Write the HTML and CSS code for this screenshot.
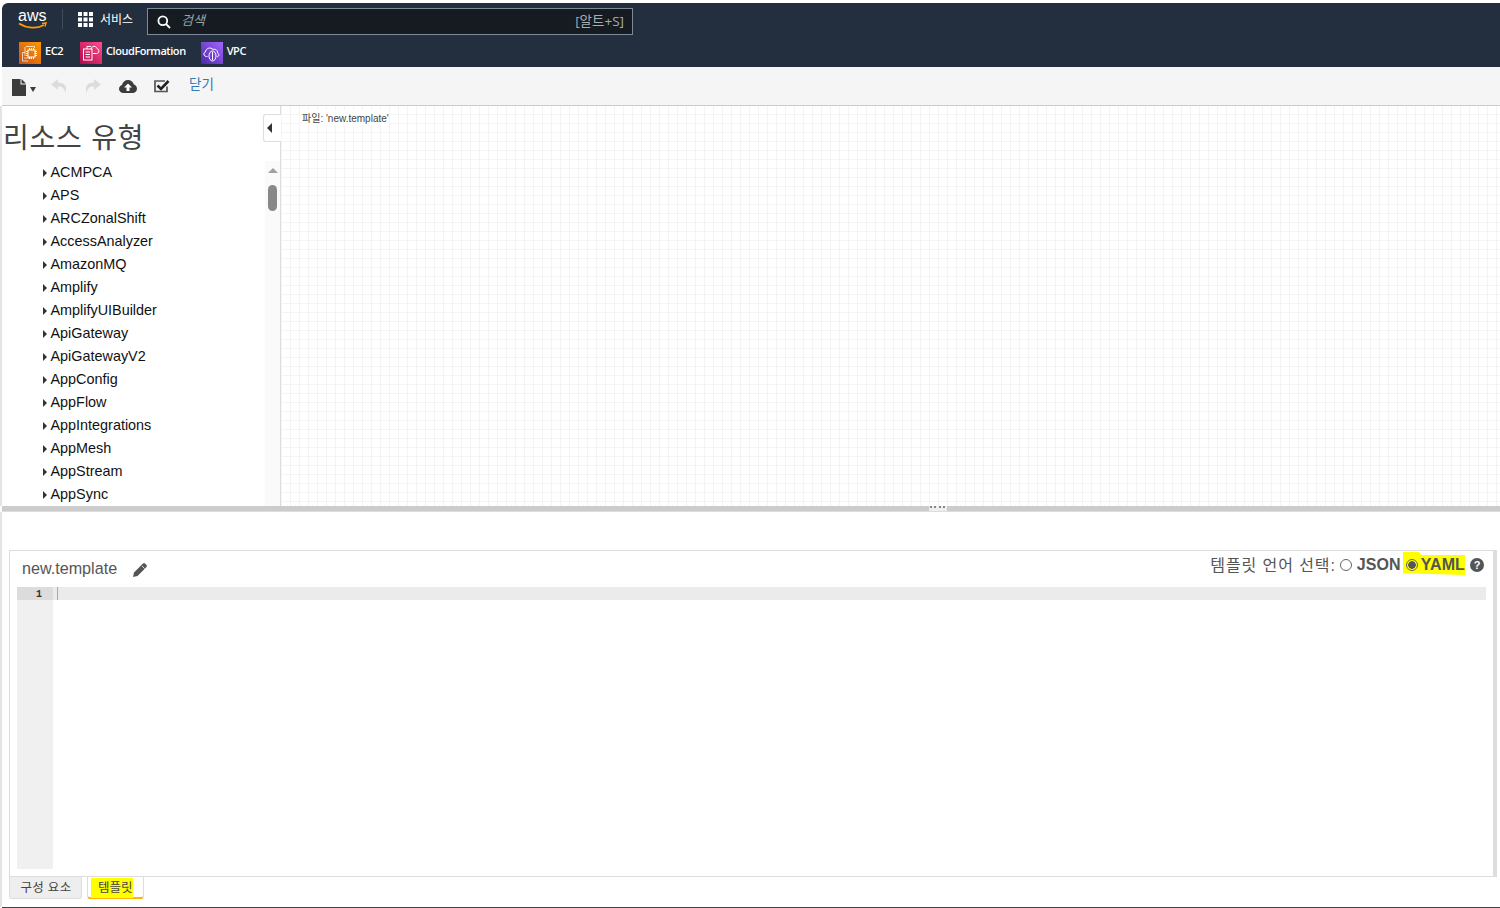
FILE: index.html
```html
<!DOCTYPE html>
<html lang="ko">
<head>
<meta charset="utf-8">
<title>CloudFormation Designer</title>
<link rel="stylesheet" href="styles.css">
</head>
<body>
<div class="app">
  <header class="nav">
    <div class="nav-top">
      <svg class="aws-logo" width="32" height="24" viewBox="0 0 32 24">
        <text x="0" y="13" class="aws-text">aws</text>
        <path d="M1 15.500c8 5 18 5.500 25 1.500" fill="none" stroke="#f90" stroke-width="1.700"/>
        <path d="M24 15.500l4-.5-1 3.500" fill="none" stroke="#f90" stroke-width="1.500"/>
      </svg>
      <span class="nav-sep"></span>
      <svg class="grid-icon" width="15" height="15" viewBox="0 0 15 15" fill="#fff">
        <rect width="4" height="4"/><rect x="5.500" width="4" height="4"/><rect x="11" width="4" height="4"/>
        <rect y="5.500" width="4" height="4"/><rect x="5.500" y="5.500" width="4" height="4"/><rect x="11" y="5.500" width="4" height="4"/>
        <rect y="11" width="4" height="4"/><rect x="5.500" y="11" width="4" height="4"/><rect x="11" y="11" width="4" height="4"/>
      </svg>
      <span class="services">서비스</span>
      <div class="search">
        <svg width="14" height="14" viewBox="0 0 14 14" fill="none" stroke="#fff" stroke-width="1.800"><circle cx="5.800" cy="5.800" r="4.400"/><path d="M9 9l4 4"/></svg>
        <span class="search-ph">검색</span>
        <span class="search-key">[알트+S]</span>
      </div>
    </div>
    <div class="nav-fav">
      <a class="fav fav-ec2">
        <span class="fav-icon ec2"><svg width="18" height="18" viewBox="0 0 18 18" fill="none" stroke="#fff" stroke-width="1"><path d="M7 17H1.500V8.500H4M5 2.500h8.500V4" stroke-opacity=".7"/><path d="M4 14h-1" stroke-opacity=".7"/><path d="M4 12V3" stroke-opacity=".7"/><path d="M4 14h6" stroke-opacity=".7"/><rect x="7" y="6" width="7" height="7"/><path d="M8.500 4v2M10.500 4v2M12.500 4v2M8.500 13v2M10.500 13v2M12.500 13v2M5 7.500h2M5 9.500h2M5 11.500h2M14 7.500h2M14 9.500h2M14 11.500h2"/></svg></span>
        <span>EC2</span>
      </a>
      <a class="fav fav-cf">
        <span class="fav-icon cf"><svg width="18" height="18" viewBox="0 0 18 18" fill="none" stroke="#fff" stroke-width="1"><path d="M5 5V2.500h4M9 5c1-3.500 5-3.500 6-.5 2.500.5 2.500 5-.5 5H11"/><rect x="1.500" y="5" width="8.500" height="11"/><path d="M3.500 8h4.500M3.500 10.500h4.500M3.500 13h4.500"/></svg></span>
        <span>CloudFormation</span>
      </a>
      <a class="fav">
        <span class="fav-icon vpc"><svg width="18" height="18" viewBox="0 0 18 18" fill="none" stroke="#fff" stroke-width="1"><path d="M4.500 12.500H3.500c-3 0-3.500-4-1-4.500 0-3.500 5-5.500 7.500-2.500 2.500-1 5 1 4.500 3.500 2 .5 2 3.500-.5 3.500"/><ellipse cx="9.500" cy="12" rx="3.500" ry="5"/><path d="M9.500 8v8"/></svg></span>
        <span>VPC</span>
      </a>
    </div>
  </header>

  <div class="toolbar">
    <span class="tool-file">
      <svg width="15" height="17" viewBox="0 0 15 17" fill="#3c3c3c"><path d="M0 0h8.500v5.500H14V17H0z"/><path d="M9.500 0L14 4.500H9.500z"/></svg>
      <span class="caret"></span>
    </span>
    <svg class="tool tool-undo" width="17" height="14" viewBox="0 0 17 14" fill="#dcdcdc"><path d="M7 0L0 5.500 7 11V7.500c4 0 6 1 7.500 6.500 2-6.500-1-10.500-7.500-10.500z"/></svg>
    <svg class="tool tool-redo" width="17" height="14" viewBox="0 0 17 14" fill="#dcdcdc"><path d="M10 0l7 5.500L10 11V7.500c-4 0-6 1-7.500 6.500-2-6.500 1-10.500 7.500-10.500z"/></svg>
    <svg class="tool" width="18" height="13" viewBox="0 0 18 13"><path d="M4.500 13C2 13 0 11.300 0 9c0-2 1.300-3.500 3-4C3.500 2 6 0 9 0c2.800 0 5 1.800 5.700 4.200C16.600 4.800 18 6.600 18 8.800 18 11.200 16 13 13.500 13z" fill="#3c3c3c"/><path d="M9 3.500L5 7.500h2.500V11h3V7.500H13z" fill="#fff"/></svg>
    <svg class="tool" width="16" height="14" viewBox="0 0 16 14" fill="none"><path d="M13 7.500V12.500H1V2h10" stroke="#555" stroke-width="1.700"/><path d="M3.500 6.500L7 10l7.500-8" stroke="#222" stroke-width="2.600"/></svg>
    <a class="close-link">닫기</a>
  </div>

  <div class="designer">
    <aside class="palette">
      <h2 class="palette-title">리소스 유형</h2>
      <div class="palette-body">
        <ul class="tree">
          <li>ACMPCA</li>
          <li>APS</li>
          <li>ARCZonalShift</li>
          <li>AccessAnalyzer</li>
          <li>AmazonMQ</li>
          <li>Amplify</li>
          <li>AmplifyUIBuilder</li>
          <li>ApiGateway</li>
          <li>ApiGatewayV2</li>
          <li>AppConfig</li>
          <li>AppFlow</li>
          <li>AppIntegrations</li>
          <li>AppMesh</li>
          <li>AppStream</li>
          <li>AppSync</li>
        </ul>
        <div class="scrollbar">
          <span class="sb-up"></span>
          <span class="sb-thumb"></span>
        </div>
      </div>
      <button class="collapse"><span class="collapse-arrow"></span></button>
    </aside>
    <main class="canvas">
      <span class="file-label">파일: 'new.template'</span>
    </main>
  </div>

  <div class="splitter"><span class="grip"></span></div>

  <section class="editor-wrap">
    <div class="editor-panel">
      <div class="editor-head">
        <div class="file-name">
          <span>new.template</span>
          <svg width="15" height="15" viewBox="0 0 15 15" fill="#555"><path d="M0 15l1-4.500L10 1.500a1.500 1.500 0 0 1 2 0l1.500 1.500a1.500 1.500 0 0 1 0 2L4.500 14z"/><path d="M9 4l2.500 2.500" stroke="#fff" stroke-width=".8"/></svg>
        </div>
        <div class="lang">
          <span class="lang-label">템플릿 언어 선택:</span>
          <span class="radio"></span>
          <b class="lang-opt">JSON</b>
          <span class="hl-yaml">
            <span class="radio checked"></span>
            <b class="lang-opt">YAML</b>
          </span>
          <svg class="help" width="14" height="14" viewBox="0 0 14 14"><circle cx="7" cy="7" r="7" fill="#555"/><text x="7" y="11" class="help-q">?</text></svg>
        </div>
      </div>
      <div class="code">
        <div class="gutter"><div class="gutter-active">1</div></div>
        <div class="lines"><div class="active-line"><span class="cursor"></span></div></div>
      </div>
    </div>
    <div class="tabs">
      <span class="tab">구성 요소</span>
      <span class="tab active"><mark class="hl-tab">템플릿</mark></span>
    </div>
  </section>
  <div class="bottom-line"></div>
</div>
</body>
</html>
```
FILE: styles.css
```css
* { box-sizing: border-box; }
html, body { margin: 0; padding: 0; height: 908px; overflow: hidden; background: #fff; }
body { font-family: "Liberation Sans", "Noto Sans CJK KR", sans-serif; color: #000; }
.app { display: flex; flex-direction: column; height: 908px; padding-top: 3px; }

.nav { margin-left: 2px; height: 64px; background: #232f3e; border-top-left-radius: 6px; color: #fff; font-family: "Open Sans", "Noto Sans CJK KR", sans-serif; }
.nav-top { height: 32px; display: flex; align-items: center; padding-left: 16px; }
.aws-logo { margin-top: 2px; flex: none; }
.aws-text { font: 16px "Liberation Sans", sans-serif; fill: #fff; }
.nav-sep { width: 1px; height: 20px; background: #414d5c; margin: 0 15px 0 12px; }
.grid-icon { flex: none; }
.services { font-size: 12px; margin-left: 7px; width: 47px; margin-top: -1px; }
.search { width: 486px; height: 27px; margin-top: 5px; background: #161b22; border: 1px solid #7d8998; display: flex; align-items: center; padding: 0 8px 0 9px; }
.search-ph { font-style: italic; font-size: 13px; color: #95a5a6; margin-left: 10px; flex: 1; margin-top: -4px; }
.search-key { font-size: 13.500px; color: #a3aeb5; margin-top: -3px; }

.nav-fav { height: 32px; display: flex; align-items: center; padding-left: 17px; font-size: 11px; font-weight: 600; }
.fav { display: flex; align-items: center; letter-spacing: -.45px; margin-top: 3px; }
.fav > span:last-child { margin-top: -4px; }
.fav-ec2 { margin-right: 17px; }
.fav-cf { margin-right: 15px; }
.fav-cf .fav-icon { margin-right: 4px; }
.fav-icon { width: 22px; height: 22px; display: flex; align-items: center; justify-content: center; margin-right: 4px; }
.ec2 { background: linear-gradient(45deg, #c8511b, #ff9900); }
.cf { background: linear-gradient(45deg, #b0084d, #ff4f8b); }
.vpc { background: linear-gradient(45deg, #4d27a8, #a166ff); }

.toolbar { margin-left: 2px; height: 39px; background: #f5f5f5; border-bottom: 1px solid #ccc; display: flex; align-items: center; padding-left: 10px; }
.tool-file { display: flex; align-items: center; width: 39px; margin-top: 2px; }
.caret { width: 0; height: 0; border-left: 3px solid transparent; border-right: 3px solid transparent; border-top: 5px solid #3c3c3c; margin: 4px 0 0 3px; }
.tool { margin-right: 17px; flex: none; }
.tool-undo { margin-right: 16px; }
.tool-redo { margin-right: 18px; }
.close-link { color: #337ab7; font-size: 13.500px; margin: -7px 0 0 2px; }

.designer { height: 400px; display: flex; border-left: 2px solid #e4e4e4; }
.palette { width: 279px; position: relative; border-right: 1px solid #ddd; display: flex; flex-direction: column; overflow: visible; }
.palette-title { margin: 18px 0 0 1px; height: 31px; font-size: 28px; letter-spacing: .8px; font-weight: 400; line-height: 30px; color: #444; white-space: nowrap; }
.palette-body { flex: 1; display: flex; min-height: 0; margin-top: 6px; overflow: hidden; }
.tree { list-style: none; margin: 0; padding: 0 0 0 39px; flex: 1; }
.tree li { height: 23px; font-size: 14.400px; line-height: 23px; color: #111; position: relative; padding-left: 9.500px; white-space: nowrap; }
.tree li::before { content: ""; position: absolute; left: 1.500px; top: 7.500px; border-top: 4px solid transparent; border-bottom: 4px solid transparent; border-left: 4px solid #333; }
.scrollbar { width: 15px; background: #fafafa; position: relative; flex: none; }
.sb-up { position: absolute; left: 3px; top: 7px; border-left: 5px solid transparent; border-right: 5px solid transparent; border-bottom: 5px solid #a0a0a0; }
.sb-thumb { position: absolute; left: 3px; top: 24px; width: 9px; height: 26px; border-radius: 5px; background: #888; }
.collapse { position: absolute; right: -1px; top: 8px; width: 18px; height: 28px; padding: 0 0 0 3px; background: #fff; border: 1px solid #ddd; border-right: 0; border-radius: 3px 0 0 3px; display: flex; align-items: center; justify-content: flex-start; }
.collapse-arrow { border-top: 5px solid transparent; border-bottom: 5px solid transparent; border-right: 5px solid #333; }

.canvas { flex: 1; position: relative; background-color: #fff; background-image: linear-gradient(to right, #f4f4f4 1px, transparent 1px), linear-gradient(to bottom, #f4f4f4 1px, transparent 1px); background-size: 9px 9px; background-position: 0 8px; }
.file-label { position: absolute; left: 21px; top: 4px; font-size: 10px; color: #444; background: #fff; white-space: nowrap; }

.splitter { height: 6px; margin-left: 2px; background: #ccc; border-bottom: 1px solid #ddd; display: flex; flex: none; }
.grip { width: 18px; height: 5px; margin-left: 927px; background-color: #eee; background-image: repeating-linear-gradient(to right, #888 0 2px, #eee 2px 4.500px); background-size: 100% 2px; background-position: 1px 0; background-repeat: no-repeat; }

.editor-wrap { flex: 1; padding: 38px 3px 0 7px; border-left: 2px solid #e4e4e4; display: flex; flex-direction: column; min-height: 0; }
.editor-panel { height: 327px; border: 1px solid #ddd; border-right: 4px solid #ddd; padding: 0 7px 7px 7px; display: flex; flex-direction: column; }
.editor-head { height: 36px; display: flex; justify-content: space-between; flex: none; }
.file-name { display: flex; align-items: center; gap: 16px; font-size: 16.150px; color: #555; padding: 0 0 2px 5px; }
.file-name svg { margin-top: 3px; }
.lang { display: flex; align-items: center; font-size: 16px; color: #555; height: 28px; padding-right: 2px; }
.lang-label { margin: -2px 4px 0 0; letter-spacing: .9px; }
.lang-opt { font-weight: 700; letter-spacing: .1px; }
.radio { width: 12px; height: 12px; border-radius: 50%; border: 1px solid #666; background: #fff; margin: 0 5px 0 0; flex: none; }
.radio.checked { background: radial-gradient(circle, #555 0 3.500px, transparent 4px); margin: 0 3px 0 3px; }
.hl-yaml { display: flex; align-items: center; background: #ff0; height: 23px; margin: -3px 5px 0 2px; padding-top: 2px; color: #555; clip-path: polygon(0 0, 26% 0, 30% 13%, 100% 13%, 100% 100%, 0 92%); }
.help { flex: none; }
.help-q { font: bold 11px "Liberation Sans", sans-serif; fill: #fff; text-anchor: middle; }

.code { flex: 1; display: flex; min-height: 0; }
.gutter { width: 36px; background: #f0f0f0; flex: none; }
.gutter-active { height: 13px; background: #dcdcdc; font: bold 10px/15px "Liberation Mono", monospace; color: #333; text-align: right; padding-right: 11px; overflow: hidden; }
.lines { flex: 1; }
.active-line { height: 13px; background: #ebebeb; padding-left: 4px; }
.cursor { display: block; width: 1px; height: 13px; background: #aaa; }

.tabs { height: 23px; display: flex; border-top: 1px solid #ddd; margin-top: -1px; flex: none; }
.tab { width: 73px; height: 22px; background: #eee; border: 1px solid #ddd; border-top: 0; border-radius: 0 0 3px 3px; font-size: 12.500px; letter-spacing: .3px; line-height: 22px; text-align: center; color: #444; padding-left: 1px; }
.tab.active { width: 57px; margin-left: 5px; background: #fff; border-bottom: 2px solid #ffb600; font-size: 12.500px; letter-spacing: 0; padding-left: 3px; text-align: left; }
.hl-tab { background: #ff0; color: #444; padding: 3px 0 3px 7px; }

.bottom-line { height: 1px; background: #444; margin-left: 2px; flex: none; }
```
